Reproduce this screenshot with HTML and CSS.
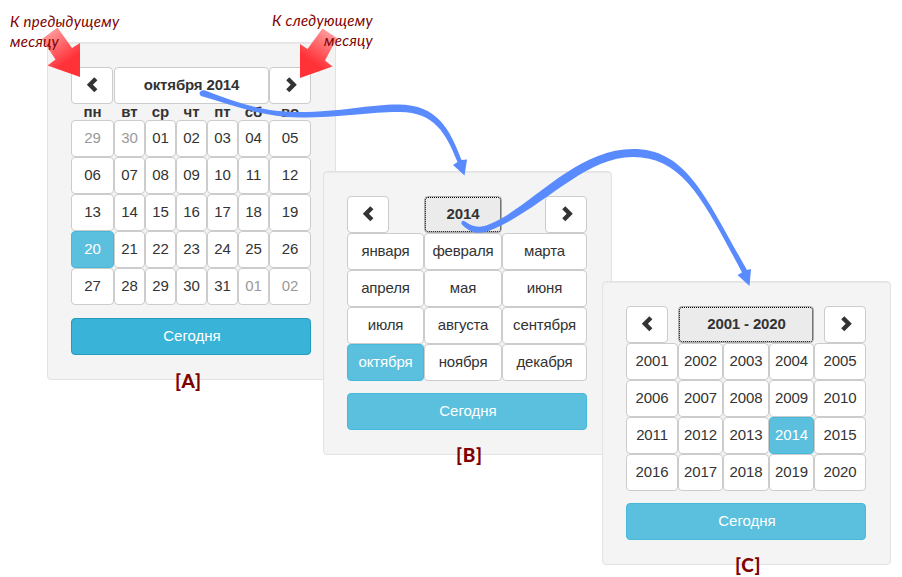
FILE: index.html
```html
<!DOCTYPE html>
<html lang="ru">
<head>
<meta charset="utf-8">
<title>Календарь</title>
<link rel="stylesheet" href="styles.css">
</head>
<body>
<svg class="defs" width="0" height="0" aria-hidden="true">
  <symbol id="prev" viewBox="0 0 12 16"><path d="M8.300 .3 11.400 3.300 6.900 7.800 11.400 12.300 8.300 15.300 .8 7.800Z"/></symbol>
  <symbol id="next" viewBox="0 0 12 16"><path d="M4.300 .3 1.200 3.300 5.700 7.800 1.200 12.300 4.300 15.300 11.800 7.800Z"/></symbol>
</svg>
<main class="stage">
  <section class="well well-days">
    <div class="head">
      <button class="btn nav"><svg class="icon"><use href="#prev"/></svg></button>
      <button class="btn title">октября 2014</button>
      <button class="btn nav next"><svg class="icon"><use href="#next"/></svg></button>
    </div>
    <div class="grid weekdays"><b>пн</b><b>вт</b><b>ср</b><b>чт</b><b>пт</b><b>сб</b><b>во</b></div>
    <div class="grid">
      <button class="btn muted">29</button><button class="btn muted">30</button><button class="btn">01</button><button class="btn">02</button><button class="btn">03</button><button class="btn">04</button><button class="btn">05</button>
      <button class="btn">06</button><button class="btn">07</button><button class="btn">08</button><button class="btn">09</button><button class="btn">10</button><button class="btn">11</button><button class="btn">12</button>
      <button class="btn">13</button><button class="btn">14</button><button class="btn">15</button><button class="btn">16</button><button class="btn">17</button><button class="btn">18</button><button class="btn">19</button>
      <button class="btn info">20</button><button class="btn">21</button><button class="btn">22</button><button class="btn">23</button><button class="btn">24</button><button class="btn">25</button><button class="btn">26</button>
      <button class="btn">27</button><button class="btn">28</button><button class="btn">29</button><button class="btn">30</button><button class="btn">31</button><button class="btn muted">01</button><button class="btn muted">02</button>
    </div>
    <button class="btn info today hover">Сегодня</button>
  </section>
  <section class="well well-months">
    <div class="head">
      <button class="btn nav"><svg class="icon"><use href="#prev"/></svg></button>
      <button class="btn title focused">2014</button>
      <button class="btn nav next"><svg class="icon"><use href="#next"/></svg></button>
    </div>
    <div class="grid">
      <button class="btn">января</button><button class="btn">февраля</button><button class="btn">марта</button>
      <button class="btn">апреля</button><button class="btn">мая</button><button class="btn">июня</button>
      <button class="btn">июля</button><button class="btn">августа</button><button class="btn">сентября</button>
      <button class="btn info">октября</button><button class="btn">ноября</button><button class="btn">декабря</button>
    </div>
    <button class="btn info today">Сегодня</button>
  </section>
  <section class="well well-years">
    <div class="head">
      <button class="btn nav"><svg class="icon"><use href="#prev"/></svg></button>
      <button class="btn title focused">2001 - 2020</button>
      <button class="btn nav next"><svg class="icon"><use href="#next"/></svg></button>
    </div>
    <div class="grid">
      <button class="btn">2001</button><button class="btn">2002</button><button class="btn">2003</button><button class="btn">2004</button><button class="btn">2005</button>
      <button class="btn">2006</button><button class="btn">2007</button><button class="btn">2008</button><button class="btn">2009</button><button class="btn">2010</button>
      <button class="btn">2011</button><button class="btn">2012</button><button class="btn">2013</button><button class="btn info">2014</button><button class="btn">2015</button>
      <button class="btn">2016</button><button class="btn">2017</button><button class="btn">2018</button><button class="btn">2019</button><button class="btn">2020</button>
    </div>
    <button class="btn info today">Сегодня</button>
  </section>
  <svg class="arrows" viewBox="0 0 902 577" width="902" height="577" aria-hidden="true">
    <defs>
      <linearGradient id="redL" gradientUnits="userSpaceOnUse" x1="48" y1="32" x2="74" y2="68"><stop offset="0" stop-color="#ff9c9c"/><stop offset=".8" stop-color="#ff3238"/></linearGradient>
      <linearGradient id="redR" gradientUnits="userSpaceOnUse" x1="330" y1="32" x2="306" y2="68"><stop offset="0" stop-color="#ff9c9c"/><stop offset=".8" stop-color="#ff3238"/></linearGradient>
    </defs>
    <path fill="url(#redL)" d="M57.500 27.500 72 48 80 43V77L47.500 65.500 55.500 59.500 42 39Z"/>
    <path fill="url(#redR)" d="M322.500 28.500 337 38 325 60.500 332.500 66.500 300 78V44L307.500 49Z"/>
    <g fill="#598bff">
      <path d="M205 90.500C235 102 262 112 300 112 340 112 370 104.500 398 104.500 438 104.500 450 130 461.500 160L467 159.500 464.500 175.500 453 165 457.500 162C446 133 434 112 400 112 376 111.500 340 117.500 300 117.500 262 117 232 105 201 96 197.500 93 201 89 205 90.500Z"/>
      <path d="M465 221.500C478 231 487 226 503 217.500 541 195 582 149 633 149 687 149 706 198 747 270L751 269 749.500 286 737.500 275 742 272.500C704 201 683 157 633 157 588 157 549 201 504 224 488 232 475 239 461.500 224 461 221 463 220 465 221.500Z"/>
    </g>
  </svg>
  <p class="note note-prev">К предыдущему<br>месяцу</p>
  <p class="note note-next">К следующему<br>месяцу</p>
  <strong class="tag tag-a">[A]</strong>
  <strong class="tag tag-b">[B]</strong>
  <strong class="tag tag-c">[C]</strong>
</main>
</body>
</html>
```
FILE: styles.css
```css
* { box-sizing: border-box; }
body { margin: 0; background: #fff; color: #333; font: 15px/20px "Liberation Sans", Arial, sans-serif; }
.defs { position: absolute; }
.stage { position: relative; width: 902px; height: 577px; overflow: hidden; }

/* Overlapping calendar popups */
.well {
  position: absolute; width: 289px; padding: 24px 24px 24px 23px;
  background: #f4f4f4; border: 1px solid #e3e3e3; border-radius: 4px;
  box-shadow: inset 0 1px 1px rgba(0, 0, 0, .05);
}
.well-days { left: 47px; top: 42px; --columns: 43px repeat(5, 31px) 42px; }
.well-months { left: 323px; top: 171px; --columns: 77px 78px 85px; }
.well-years { left: 602px; top: 281px; --columns: 52px 45px 46px 45px 52px; }

.head { display: flex; justify-content: space-between; }
.grid { display: grid; grid-template-columns: var(--columns); grid-auto-rows: 37px; }
.weekdays { grid-auto-rows: 16px; text-align: center; line-height: 16px; }

.btn {
  display: flex; align-items: center; justify-content: center;
  height: 37px; min-width: 0; margin: 0; padding: 0 0 1px;
  font: inherit; letter-spacing: -.15px; color: #333; background: #fff; border: 1px solid #ccc; border-radius: 4px;
}
.nav { width: 42px; }
.next { padding-left: 2px; }
.icon { width: 12px; height: 16px; fill: #333; }
.title { font-weight: bold; }
.well-days .title { width: 155px; margin-left: 1px; }
.well-months .title { width: 78px; margin-right: 8px; }
.well-years .title { width: 136px; padding-left: 1px; }
.focused { background: #ebebeb; border-color: #adadad; outline: 1px dotted #000; outline-offset: -2px; }
.muted { color: #999; }
.info { color: #fff; background: #5bc0de; border-color: #46b8da; }
.today { width: 100%; margin-top: 12px; padding-left: 2px; letter-spacing: 0; }
.hover { margin-top: 13px; background: #39b3d7; border-color: #269abc; }

/* Annotations */
.arrows { position: absolute; left: 0; top: 0; }
.note { position: absolute; margin: 0; color: #800000; font: italic 15px/20px Lato, "Open Sans", sans-serif; letter-spacing: .3px; white-space: nowrap; }
.note-prev { left: 10px; top: 11px; }
.note-next { right: 529px; top: 10px; text-align: right; }
.tag { position: absolute; color: #800000; font: 900 19px/24px Lato, "Open Sans", sans-serif; letter-spacing: .7px; }
.tag-a { left: 175px; top: 369px; }
.tag-b { left: 456px; top: 443px; }
.tag-c { left: 735px; top: 553px; }
```
